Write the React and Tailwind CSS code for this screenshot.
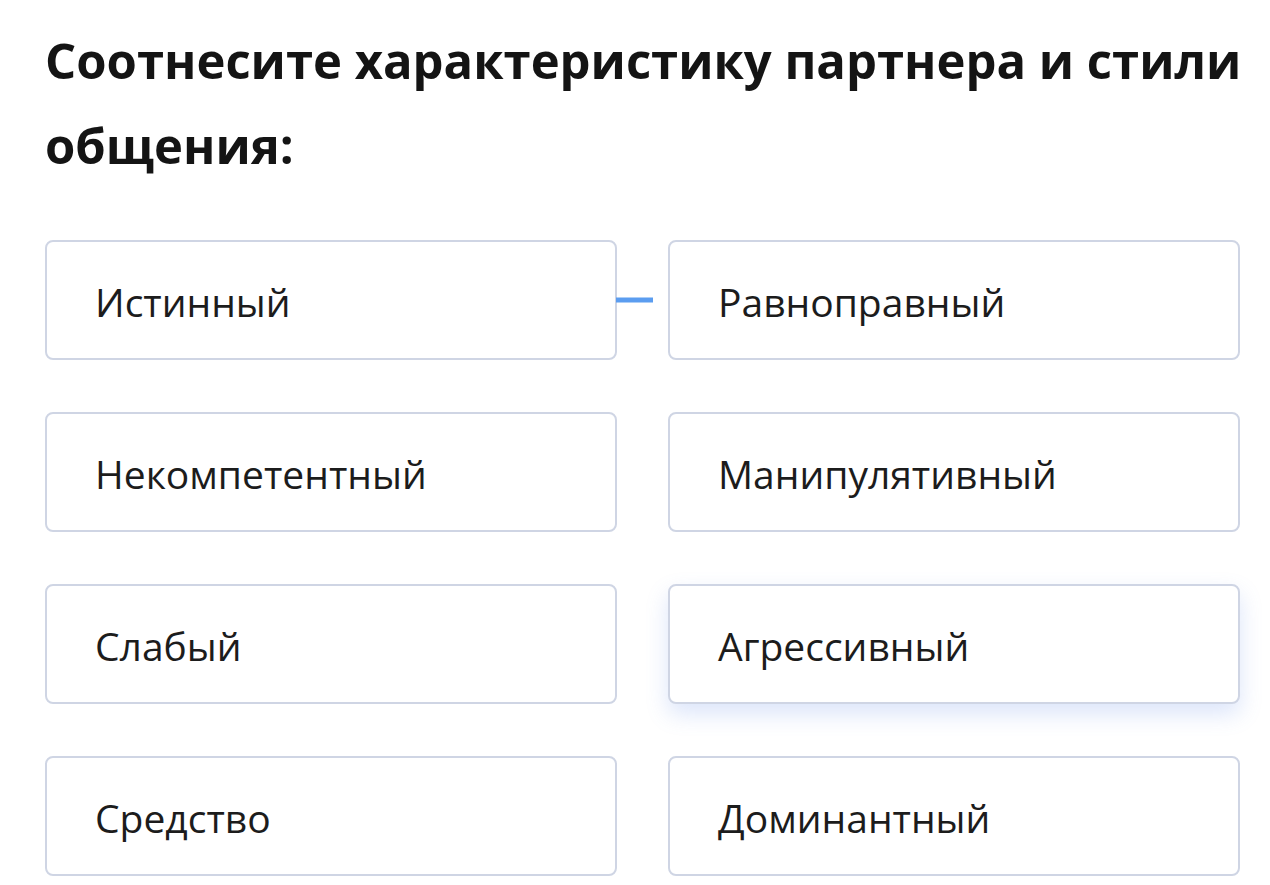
const pairs = [
  { left: "Истинный", right: "Равноправный", linked: true },
  { left: "Некомпетентный", right: "Манипулятивный" },
  { left: "Слабый", right: "Агрессивный", active: true },
  { left: "Средство", right: "Доминантный" },
];

function Card({ text, linked, active }) {
  return (
    <div
      className={
        "relative flex h-[120px] items-center rounded-[8px] border-2 border-[#cfd5e4] bg-white pl-12 " +
        (active ? "shadow-[0_10px_22px_rgba(96,136,230,0.22)]" : "")
      }
    >
      <span className="pt-[2px] text-[39px] leading-none text-[#1c1c1c]">{text}</span>
      {linked && (
        <span className="absolute left-full top-1/2 ml-[1px] h-[5px] w-[37px] -translate-y-1/2 bg-[#5b9df0]" />
      )}
    </div>
  );
}

export default function App() {
  return (
    <div
      className="min-h-screen bg-white pl-[45px] pr-[30px] pt-[18px]"
      style={{ fontFamily: "'Open Sans', 'Noto Sans', sans-serif" }}
    >
      <h1 className="-mr-[30px] text-[49px] font-bold leading-[85px] text-[#141414]">
        Соотнесите характеристику партнера и стили общения:
      </h1>
      <div className="mt-[52px] grid grid-cols-2 gap-x-[51px] gap-y-[52px]">
        {pairs.map((p) => (
          <div key={p.left} className="contents">
            <Card text={p.left} linked={p.linked} />
            <Card text={p.right} active={p.active} />
          </div>
        ))}
      </div>
    </div>
  );
}
